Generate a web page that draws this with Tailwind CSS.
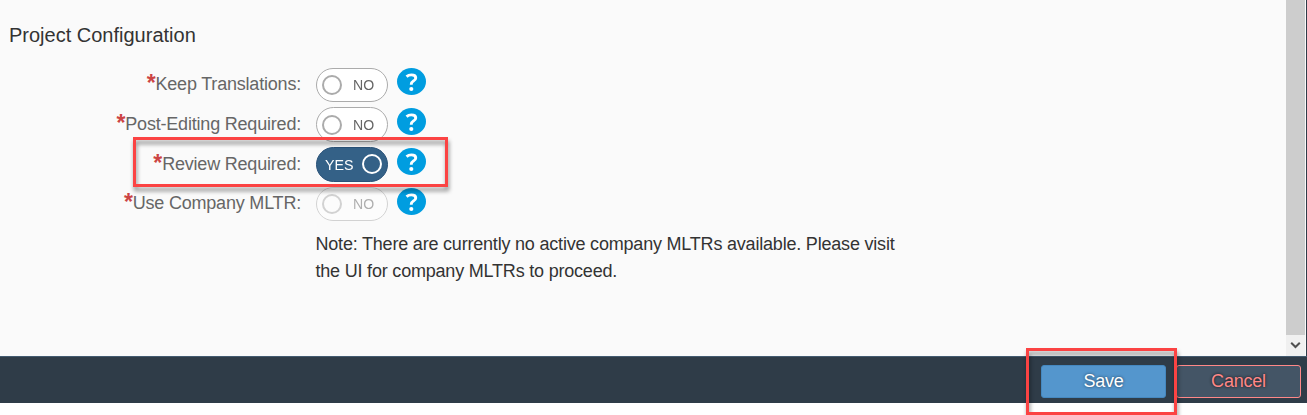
<!DOCTYPE html>
<html lang="en">
<head>
<meta charset="utf-8">
<title>Project Configuration</title>
<script src="https://cdn.jsdelivr.net/npm/@tailwindcss/browser@4"></script>
</head>
<body class="relative h-[415px] w-[1307px] overflow-hidden bg-white font-['Liberation_Sans',Arial,sans-serif] text-[18px] text-[#333333]">
<svg class="hidden">
  <symbol id="help" viewBox="0 0 28 27" preserveAspectRatio="none">
    <ellipse cx="14" cy="13.5" rx="14" ry="13.5" fill="#009de0"/>
    <path d="M9.2 8.6C10.6 7.4 12 6.9 13.9 6.9c2.7 0 4.2 1.1 4.2 3 0 3.1-4.3 3-4.3 6.2v.6" fill="none" stroke="#fff" stroke-width="2.8"/>
    <circle cx="13.8" cy="21" r="2" fill="#fff"/>
  </symbol>
</svg>
<div class="flex h-[356px] bg-[#fafafa]">
  <main class="flex-1">
    <h1 class="pl-[9px] pt-[20px] text-[20px] leading-[30px]">Project Configuration</h1>
    <div class="mt-[14px] flex flex-col">
      <div class="flex h-[40px]">
        <div class="flex w-[301px] justify-end leading-[40px] tracking-[-0.2px] text-[#666666]"><b class="text-[23px] leading-[39px] text-[#cc4444]">*</b>Keep Translations:</div>
        <div class="ml-[15px] mt-[4px] flex h-[34px] w-[72px] items-center rounded-full border border-[#ababab] bg-white pl-[5px] text-[#666666]"><i class="size-[20px] rounded-full border-2 border-[#ababab]"></i><span class="ml-[11px] origin-left scale-x-[0.94] text-[15px]">NO</span></div>
        <svg class="ml-[9px] mt-[4px] h-[27px] w-[29px]"><use href="#help" width="29" height="27"/></svg>
      </div>
      <div class="flex h-[40px]">
        <div class="flex w-[301px] justify-end leading-[40px] tracking-[-0.2px] text-[#666666]"><b class="text-[23px] leading-[39px] text-[#cc4444]">*</b>Post-Editing Required:</div>
        <div class="ml-[15px] mt-[3px] flex h-[35px] w-[72px] items-center rounded-full border border-[#ababab] bg-white pl-[5px] text-[#666666]"><i class="size-[20px] rounded-full border-2 border-[#ababab]"></i><span class="ml-[11px] mt-px origin-left scale-x-[0.94] text-[15px]">NO</span></div>
        <svg class="ml-[9px] mt-[4px] h-[27px] w-[29px]"><use href="#help" width="29" height="27"/></svg>
      </div>
      <div class="flex h-[40px]">
        <div class="flex w-[301px] justify-end leading-[40px] tracking-[-0.2px] text-[#666666]"><b class="text-[23px] leading-[39px] text-[#cc4444]">*</b>Review Required:</div>
        <div class="ml-[15px] mt-[3px] flex h-[35px] w-[72px] items-center justify-between rounded-full border border-[#285178] bg-[#346187] pl-[8px] pr-[5px] text-white"><span class="mt-px origin-left scale-x-[0.95] text-[15px]">YES</span><i class="mb-px size-[20px] rounded-full border-2 border-white"></i></div>
        <svg class="ml-[9px] mt-[4px] h-[27px] w-[29px]"><use href="#help" width="29" height="27"/></svg>
      </div>
      <div class="flex h-[40px]">
        <div class="flex w-[301px] justify-end leading-[38px] tracking-[-0.2px] text-[#666666]"><b class="text-[23px] leading-[37px] text-[#cc4444]">*</b>Use Company MLTR:</div>
        <div class="ml-[15px] mt-[3px] flex h-[34px] w-[72px] items-center rounded-full border border-[#ababab] bg-white pl-[5px] text-[#666666] opacity-50"><i class="size-[20px] rounded-full border-2 border-[#ababab]"></i><span class="ml-[11px] mt-px origin-left scale-x-[0.94] text-[15px]">NO</span></div>
        <svg class="ml-[9px] mt-[4px] h-[27px] w-[29px]"><use href="#help" width="29" height="27"/></svg>
      </div>
    </div>
    <p class="ml-[315.5px] mt-[7px] w-[600px] leading-[27px] tracking-[-0.2px]">Note: There are currently no active company MLTRs available. Please visit<br>the UI for company MLTRs to proceed.</p>
  </main>
  <div class="flex w-[19px] flex-col bg-[#f0f0f0]">
    <div class="h-[335px] bg-[#cdcdcd]"></div>
    <svg class="h-[21px] w-[19px]" viewBox="0 0 19 21"><path d="M5.2 7.7 9.5 12l4.3-4.3" fill="none" stroke="#505050" stroke-width="2"/></svg>
  </div>
  <div class="w-px bg-[#fafafa]"></div>
  <div class="w-px bg-[#2f3c48]"></div>
</div>
<footer class="flex h-[47px] justify-end gap-[10px] border-t border-[#435b70] bg-[#2f3c48] pr-[6px] pt-[8px]">
  <button class="h-[33px] w-[125px] rounded-[3px] border border-[#4588c0] bg-[#5496cd] tracking-[-0.2px] text-white text-shadow-[0_0_3px_#1f3a52]">Save</button>
  <button class="h-[33px] w-[125px] rounded-[3px] border border-[#ff8888] bg-[#445566] tracking-[-0.2px] text-[#ff8888] text-shadow-[0_0_3px_#111111]">Cancel</button>
</footer>
<div class="absolute left-[133px] top-[137px] h-[50px] w-[315px] border-3 border-[#fb4343] drop-shadow-[1px_4px_2px_rgba(0,0,0,0.45)]"></div>
<div class="absolute left-[1026px] top-[348px] h-[67px] w-[151px] border-3 border-[#fb4343] drop-shadow-[1px_4px_2px_rgba(0,0,0,0.45)]"></div>
</body>
</html>
